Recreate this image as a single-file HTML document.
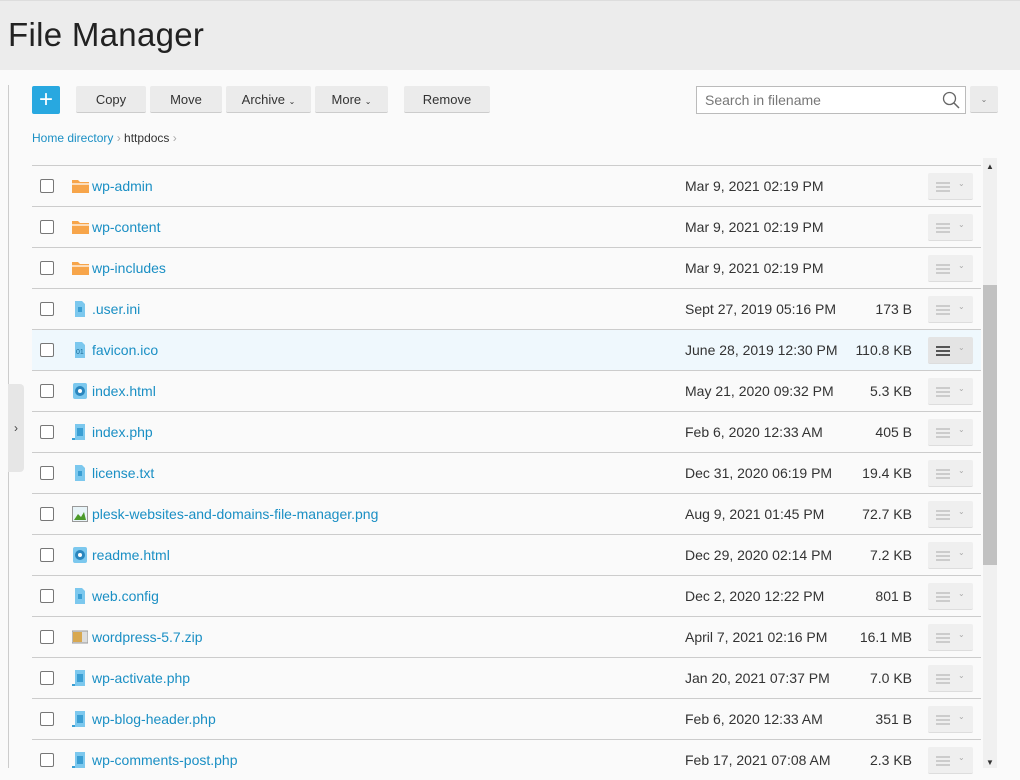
<!DOCTYPE html><html><head><style>
body{margin:0;width:1020px;height:768px;overflow:hidden;background:#fafafa;font-family:"Liberation Sans",sans-serif;position:relative}
.hdr{position:absolute;left:0;top:0;width:1020px;height:70px;background:#ececec;border-top:1px solid #ddd;box-sizing:border-box}
.hdr h1{margin:0;position:absolute;left:8px;top:15px;font-size:33px;font-weight:normal;color:#222;letter-spacing:0.3px}
.vl{position:absolute;left:8px;top:85px;width:1px;height:683px;background:#ccc}
.tog{position:absolute;left:8px;top:384px;width:16px;height:88px;background:#e6e6e6;border-radius:0 4px 4px 0;font-size:12px;color:#444;line-height:88px;text-align:center}
.btn{position:absolute;top:86px;height:27px;background:#ebebeb;border-bottom:1px solid #ccc;box-sizing:border-box;font-size:13px;color:#333;text-align:center;line-height:27px;border-radius:2px}
.plus{position:absolute;left:32px;top:86px;width:28px;height:28px;background:#28a8e0;border-radius:2px;color:#fff;font-size:24px;line-height:27px;text-align:center}
.search{position:absolute;left:696px;top:86px;width:270px;height:28px;border:1px solid #bbb;box-sizing:border-box;background:#fff;font-size:14px;color:#777;line-height:26px;padding-left:8px}
.bc{position:absolute;left:32px;top:131px;font-size:12px;color:#1a8fc4}
.row{position:absolute;left:32px;width:949px;height:41px;border-top:1px solid #ccc;box-sizing:border-box;font-size:14px}
.row .cb{position:absolute;left:8px;top:13px;width:12px;height:12px;border:1px solid #777;border-radius:2px;background:#fff}
.row .ic{position:absolute;left:40px;top:12px;width:16px;height:16px}
.row .nm{position:absolute;left:60px;top:12px;color:#1a8fc4}
.row .dt{position:absolute;left:653px;top:12px;color:#333}
.row .sz{position:absolute;right:69px;top:12px;color:#333}
.row .mb{position:absolute;left:896px;top:7px;width:45px;height:27px;background:#efefef;border-bottom:1px solid #ddd;border-radius:2px;box-sizing:border-box}
.mb i{position:absolute;left:8px;top:9px;width:14px;height:2px;background:#ccc;box-shadow:0 4px 0 #ccc,0 8px 0 #ccc}
.mb b{position:absolute;left:30px;top:6px;font-size:8px;color:#aaa;font-weight:normal}
.sb{position:absolute;left:983px;top:158px;width:14px;height:610px;background:#f0f0f0}
.th{position:absolute;left:983px;top:285px;width:14px;height:280px;background:#c1c1c1}
</style></head><body>
<div class="hdr"><h1>File Manager</h1></div>
<div class="vl"></div><div class="tog">›</div>
<div class="plus">+</div>
<div class="btn" style="left:76px;width:70px">Copy</div>
<div class="btn" style="left:150px;width:72px">Move</div>
<div class="btn" style="left:226px;width:85px">Archive <span style="font-size:8px">⌄</span></div>
<div class="btn" style="left:315px;width:73px">More <span style="font-size:8px">⌄</span></div>
<div class="btn" style="left:404px;width:86px">Remove</div>
<div class="search">Search in filename<svg style="position:absolute;right:5px;top:4px" width="18" height="18" viewBox="0 0 18 18"><circle cx="7.5" cy="7.5" r="6" fill="none" stroke="#666" stroke-width="1.3"/><path d="M12 12l5 5" stroke="#666" stroke-width="1.5"/></svg></div>
<div class="btn" style="left:970px;width:28px;font-size:8px;color:#777">⌄</div>
<div class="bc">Home directory <span style="color:#aaa">›</span> <span style="color:#333">httpdocs</span> <span style="color:#aaa">›</span></div>
<div class="sb"></div><div class="th"></div>
<div style="position:absolute;left:986px;top:162px;font-size:8px;color:#333">▲</div>
<div style="position:absolute;left:986px;top:758px;font-size:8px;color:#333">▼</div>
<div id="rows"></div>
<script>
var d=[["f","wp-admin","Mar 9, 2021 02:19 PM",""],["f","wp-content","Mar 9, 2021 02:19 PM",""],["f","wp-includes","Mar 9, 2021 02:19 PM",""],["t",".user.ini","Sept 27, 2019 05:16 PM","173 B"],["o","favicon.ico","June 28, 2019 12:30 PM","110.8 KB"],["h","index.html","May 21, 2020 09:32 PM","5.3 KB"],["p","index.php","Feb 6, 2020 12:33 AM","405 B"],["t","license.txt","Dec 31, 2020 06:19 PM","19.4 KB"],["i","plesk-websites-and-domains-file-manager.png","Aug 9, 2021 01:45 PM","72.7 KB"],["h","readme.html","Dec 29, 2020 02:14 PM","7.2 KB"],["t","web.config","Dec 2, 2020 12:22 PM","801 B"],["z","wordpress-5.7.zip","April 7, 2021 02:16 PM","16.1 MB"],["p","wp-activate.php","Jan 20, 2021 07:37 PM","7.0 KB"],["p","wp-blog-header.php","Feb 6, 2020 12:33 AM","351 B"],["p","wp-comments-post.php","Feb 17, 2021 07:08 AM","2.3 KB"]];
var ic={f:'<svg width="17" height="16"><path d="M0 2h6l2 2h9v11H0z" fill="#f7a54a"/><path d="M0 6h17" stroke="#fff" stroke-width="1.2"/></svg>',
t:'<svg width="16" height="16"><path d="M3 0h7l3 3v13H3z" fill="#7cc8ee"/><rect x="6" y="6" width="4" height="5" fill="#3a9ed3"/></svg>',
o:'<svg width="16" height="16"><path d="M3 0h7l3 3v13H3z" fill="#7cc8ee"/><text x="4" y="12" font-size="7" fill="#1a6b96" font-family="Liberation Sans">01</text></svg>',
h:'<svg width="16" height="16"><rect x="1" y="0" width="14" height="16" rx="2" fill="#7cc8ee"/><circle cx="8" cy="8" r="5" fill="#2a86be"/><circle cx="8" cy="8" r="2" fill="#fff"/></svg>',
p:'<svg width="16" height="16"><path d="M3 0h10v16H3z" fill="#7cc8ee"/><rect x="5" y="4" width="6" height="8" fill="#3a9ed3"/><rect x="0" y="14" width="3" height="2" fill="#3a9ed3"/></svg>',
i:'<svg width="16" height="16"><rect x="0.5" y="0.5" width="15" height="15" fill="#e8f4f8" stroke="#999"/><path d="M2 14l4-6 3 3 3-5 2 8z" fill="#4a9a2a"/></svg>',
z:'<svg width="16" height="16"><rect x="0" y="2" width="16" height="12" fill="#ddd" stroke="#999"/><rect x="1" y="3" width="9" height="10" fill="#d8a850"/></svg>'};
var h='';d.forEach(function(r,k){var y=165+41*k;var hl=r[1]=='favicon.ico';
h+='<div class="row" style="top:'+y+'px;'+(hl?'background:#eff8fd':'')+'"><div class="cb"></div><div class="ic">'+ic[r[0]]+'</div><div class="nm">'+r[1]+'</div><div class="dt">'+r[2]+'</div><div class="sz">'+r[3]+'</div><div class="mb" style="'+(hl?'background:#e4e4e4':'')+'"><i style="'+(hl?'background:#555;box-shadow:0 4px 0 #555,0 8px 0 #555':'')+'"></i><b>⌄</b></div></div>';});
document.getElementById('rows').innerHTML=h;
</script>
</body></html>
